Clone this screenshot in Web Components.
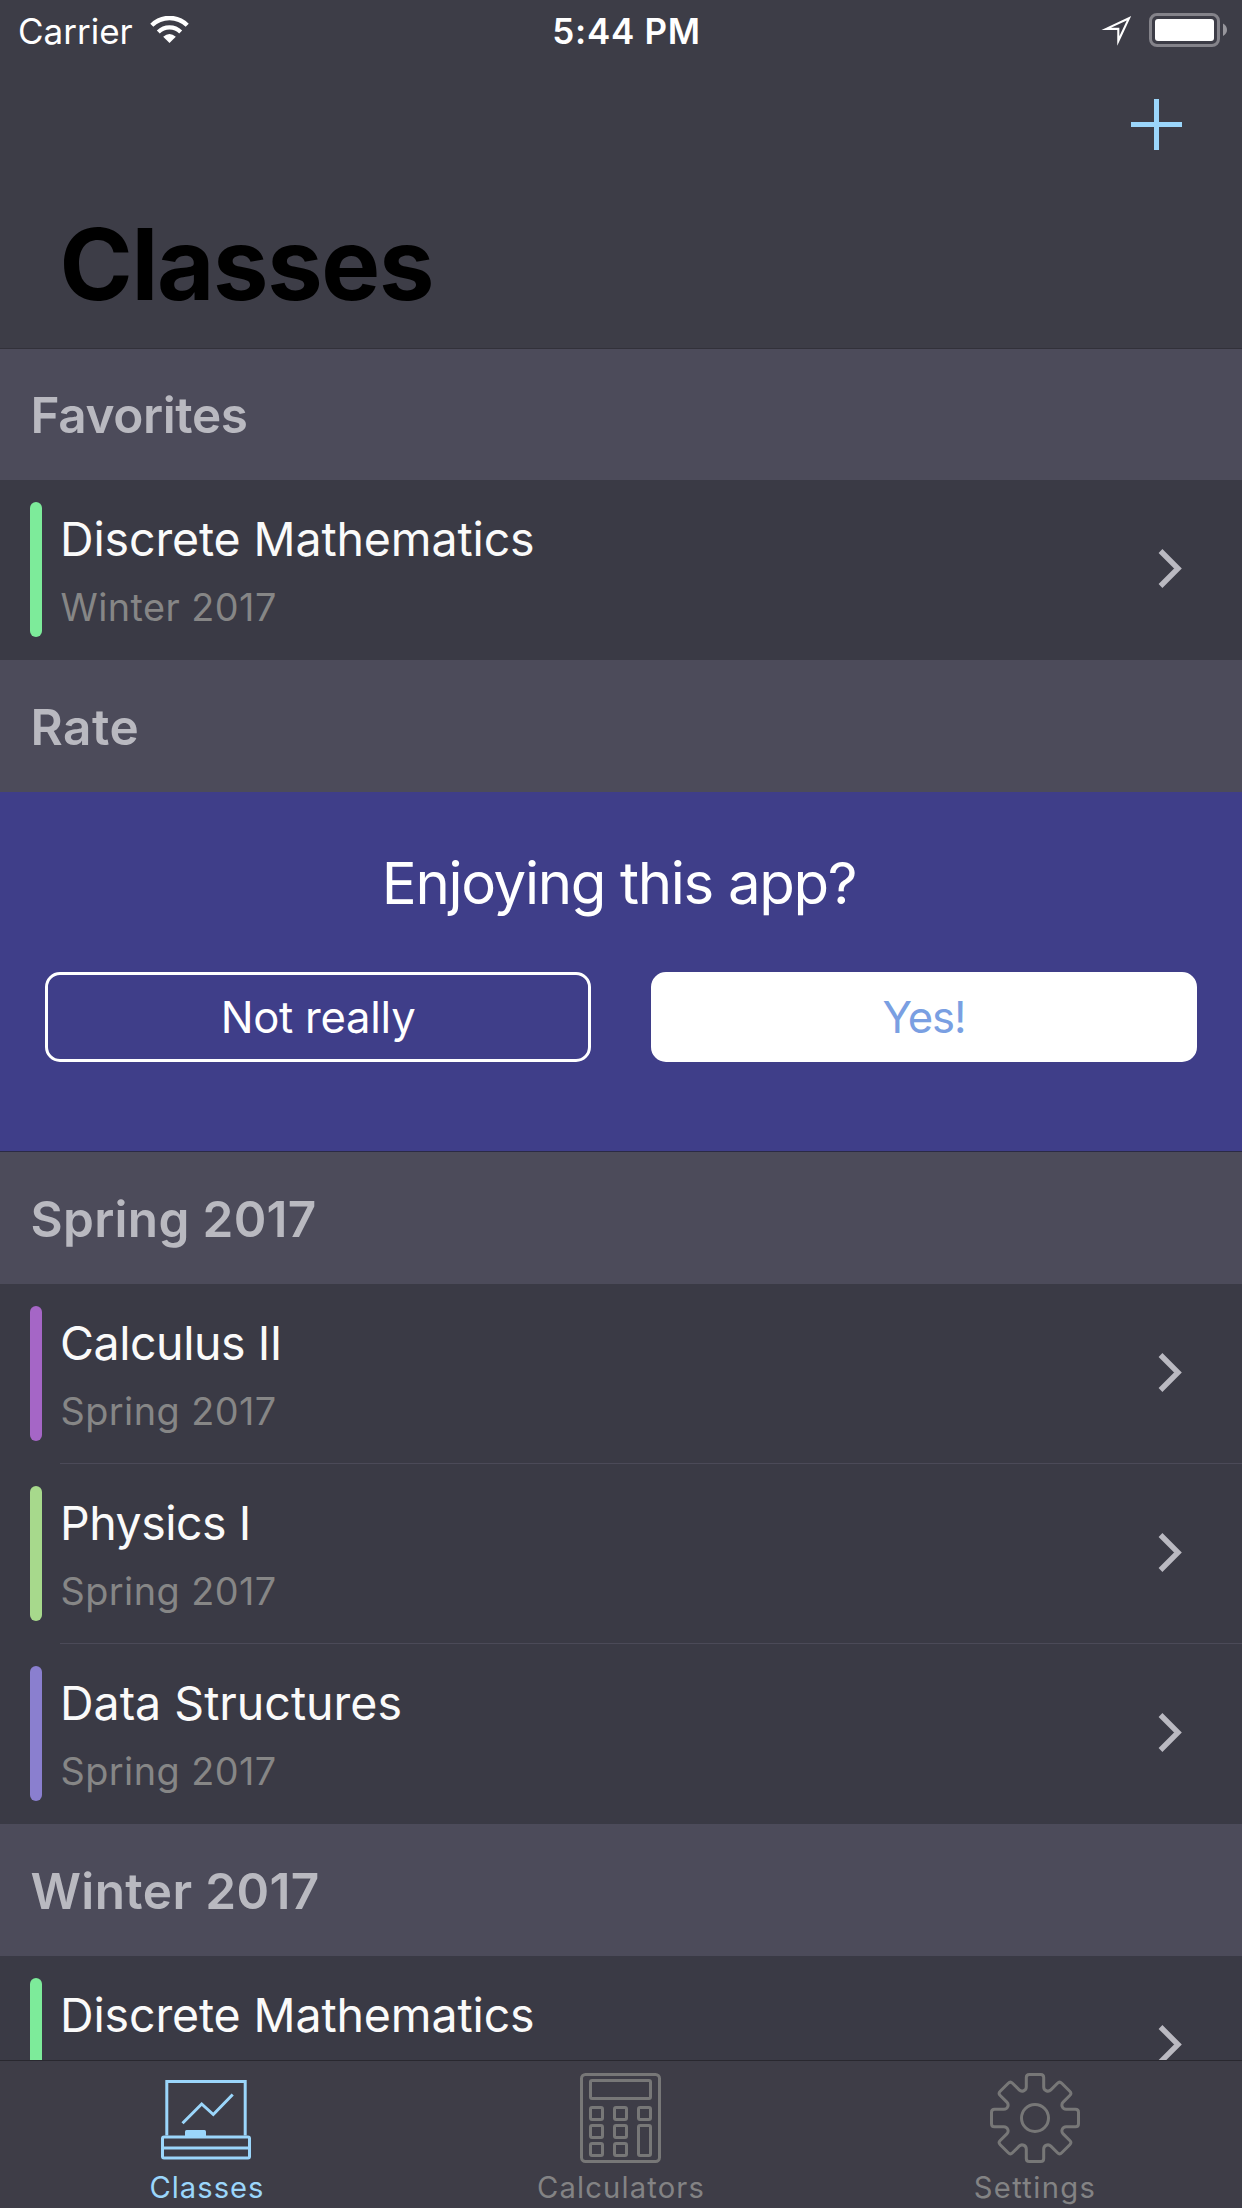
<!DOCTYPE html>
<html lang="en">
<head>
<meta charset="utf-8">
<title>Classes</title>
<style>
html,body{margin:0;padding:0;background:#3a3a45}
body{font-family:Inter,"Liberation Sans",sans-serif;color:#fff}
</style>
</head>
<body>
<app-screen>
  <nav-bar slot="top" heading="Classes" carrier="Carrier" time="5:44 PM"></nav-bar>
  <section-header style="--track:-.38px">Favorites</section-header>
  <class-row color="#7deb9a" style="--track:-.13px">Discrete Mathematics<span slot="term">Winter 2017</span></class-row>
  <section-header style="--track:.5px">Rate</section-header>
  <rate-card>Enjoying this app?
    <pill-button slot="actions" style="--track:-.26px">Not really</pill-button>
    <pill-button slot="actions" filled style="--track:-1.1px">Yes!</pill-button>
  </rate-card>
  <section-header style="--track:.3px">Spring 2017</section-header>
  <class-row color="#a566c6" divided style="--track:-.45px">Calculus II<span slot="term">Spring 2017</span></class-row>
  <class-row color="#a7d98c" divided style="--track:-.5px">Physics I<span slot="term">Spring 2017</span></class-row>
  <class-row color="#8a7fcf" style="--track:0px">Data Structures<span slot="term">Spring 2017</span></class-row>
  <section-header style="--track:.38px">Winter 2017</section-header>
  <class-row color="#7deb9a" style="--track:-.13px">Discrete Mathematics<span slot="term">Winter 2017</span></class-row>
  <tab-bar slot="bottom">
    <tab-item icon="board" active style="--track:1px">Classes</tab-item>
    <tab-item icon="calculator" style="--track:1.15px">Calculators</tab-item>
    <tab-item icon="gear" style="--track:1.35px">Settings</tab-item>
  </tab-bar>
</app-screen>
<script>
const define = (name, render) => customElements.define(name, class extends HTMLElement {
  connectedCallback() {
    if (!this.shadowRoot) this.attachShadow({mode: 'open'}).innerHTML = render(this);
  }
});

define('app-screen', () => `
<style>
:host{display:flex;flex-direction:column;width:1242px;height:2208px;overflow:hidden;background:#3a3a45}
main{flex:1;min-height:0;overflow:hidden;margin-top:-1px}
</style>
<slot name="top"></slot><main><slot></slot></main><slot name="bottom"></slot>`);

define('status-bar', el => `
<style>
:host{display:flex;height:62px;padding:0 14px 0 18px;font-size:35px;line-height:62px;white-space:nowrap}
div{flex:1 1 0;display:flex;align-items:flex-start}
.mid{justify-content:center;font-weight:600;letter-spacing:.7px;padding-left:7px}
.end{justify-content:flex-end}
.wifi{margin:16px 0 0 17px}
.loc{margin:16px 17px 0 0}
.bat{margin-top:13px}
svg{display:block;flex:none}
</style>
<div>${el.getAttribute('carrier')}
<svg class="wifi" width="39" height="28" viewBox="0 0 39 28"><path d="M1.8 9.2a25.2 25.2 0 0 1 35.4 0" fill="none" stroke="#fff" stroke-width="4.4"/><path d="M8.3 15.9a16 16 0 0 1 22.4 0" fill="none" stroke="#fff" stroke-width="4.2"/><path d="M13.2 20.8Q19.500 15.400 25.800 20.800L19.500 27z" fill="#fff"/></svg></div>
<div class="mid">${el.getAttribute('time')}</div>
<div class="end">
<svg class="loc" width="31" height="32" viewBox="0 0 31 32"><path d="M5.200 12.900L28 2.200L17.300 25V12.900z" fill="none" stroke="#fff" stroke-width="2.100" stroke-miterlimit="10"/></svg>
<svg class="bat" width="79" height="34" viewBox="0 0 79 34"><rect x="1.500" y="1.500" width="68" height="31" rx="6.500" fill="none" stroke="#84838a" stroke-width="3"/><rect x="6" y="6" width="59" height="22" rx="3" fill="#fff"/><path d="M74 10.500q4 2.300 4 6.300t-4 6.300z" fill="#97969c"/></svg>
</div>`);

define('nav-bar', el => `
<style>
:host{display:flex;flex-direction:column;height:349px;flex:none;box-sizing:border-box;border-bottom:1px solid #32313a;background:#3d3d47;position:relative;z-index:1}
.tools{display:flex;justify-content:flex-end;height:142px;padding-right:60px}
.tools svg{margin-top:37px}
h1{margin:0;padding-left:59.5px;font-size:99px;line-height:120px;font-weight:700;letter-spacing:-1.32px;color:#000}
</style>
<status-bar carrier="${el.getAttribute('carrier')}" time="${el.getAttribute('time')}"></status-bar>
<div class="tools"><svg width="51" height="51"><path d="M23 0h5v23h23v5H28v23h-5V28H0v-5h23z" fill="#9bd6fb"/></svg></div>
<h1>${el.getAttribute('heading')}</h1>`);

define('section-header', () => `
<style>
:host{display:flex;align-items:center;height:132px;box-sizing:border-box;padding:2px 0 0 30.5px;background:#4c4b5a;color:#b9b9c0;font-size:49.5px;font-weight:600;letter-spacing:var(--track)}
</style><slot></slot>`);

define('class-row', el => `
<style>
:host{display:flex;height:180px;box-sizing:border-box;padding-left:30px;background:#3a3a45}
i{flex:none;width:12px;height:135px;margin-top:22px;border-radius:6px;background:${el.getAttribute('color')}}
.body{flex:1;margin-left:18px;display:flex;justify-content:space-between;box-sizing:border-box;border-bottom:1px solid ${el.hasAttribute('divided') ? '#4b4a58' : 'transparent'}}
.text{display:flex;flex-direction:column;gap:16px;padding-top:30px;white-space:nowrap}
.name{font-size:46.5px;line-height:58px;color:#fafafa;letter-spacing:var(--track)}
.term{font-size:37.8px;line-height:46px;color:#868686;letter-spacing:.45px;padding-left:.5px}
svg{margin:69px 60px 0 0}
</style>
<i></i><div class="body"><div class="text"><div class="name"><slot></slot></div><div class="term"><slot name="term"></slot></div></div>
<svg width="25" height="40" viewBox="0 0 25 40"><path d="M3.500 2l17.500 17.500L3.500 37" fill="none" stroke="#bab9c1" stroke-width="5.400"/></svg></div>`);

define('rate-card', () => `
<style>
:host{display:flex;flex-direction:column;height:360px;box-sizing:border-box;padding:55px 45px 0;background:#3f3e89;border-bottom:1px solid #2b2a45}
.q{font-size:58.2px;line-height:72px;letter-spacing:-1.35px;text-align:center;color:#fff;padding-right:4px}
.actions{display:flex;gap:60px;margin-top:53px}
</style>
<div class="q"><slot></slot></div><div class="actions"><slot name="actions"></slot></div>`);

define('pill-button', el => `
<style>
:host{flex:1;display:flex;align-items:center;justify-content:center;height:90px;box-sizing:border-box;border:3px solid #fff;border-radius:15px;font-size:43.600px;letter-spacing:var(--track);${el.hasAttribute('filled') ? 'background:#fff;color:#7a9fe2' : 'color:#fff'}}
</style><slot></slot>`);

/* One gear outline: eight copies of a tooth and the rounded valley beside it. */
const gearPath = () => {
  let d = '';
  for (let k = 0; k < 8; k++) {
    const a = k * Math.PI / 4;
    const p = (x, y) => (x * Math.cos(a) - y * Math.sin(a)).toFixed(2) + ' ' + (x * Math.sin(a) + y * Math.cos(a)).toFixed(2);
    d += (k ? 'L' : 'M') + p(-8.7, -31.1) + 'L' + p(-8.7, -40.5) + 'Q' + p(-8.7, -43.5) + ' ' + p(-5.7, -43.5) +
      'L' + p(5.7, -43.5) + 'Q' + p(8.7, -43.5) + ' ' + p(8.7, -40.5) + 'L' + p(8.7, -31.1) + 'A4.2 4.2 0 0 0 ' + p(15.84, -28.14);
  }
  return d + 'z';
};
const key = (x, y, h = 12) => `<rect x="${x}" y="${y}" width="12" height="${h}" rx="1.500"/>`;
const ICONS = {
  board: `<path d="M4.800 62.500V8.500H83.200V62.500"/><rect x="0.500" y="64" width="87" height="21" rx="1.500"/><path d="M0 75H88M20.500 50.200L39.700 31L51.300 41.500L70.700 21.500"/><path d="M23 63v-4.500q0-1.500 1.500-1.500h18q1.500 0 1.500 1.500V63z" fill="currentColor" stroke="none"/>`,
  calculator: `<rect x="5.500" y="1.500" width="78" height="87" rx="4"/><rect x="14.500" y="7.500" width="60" height="18" rx="1.500"/>` +
    [14.5, 38.5].map(x => [34.5, 52.5, 70.5].map(y => key(x, y)).join('')).join('') + key(62.5, 34.5) + key(62.5, 52.5, 30),
  gear: `<g transform="translate(45 45)"><path d="${gearPath()}"/><circle r="13.500"/></g>`
};

define('tab-item', el => `
<style>
:host{flex:1 1 0;display:flex;flex-direction:column;align-items:center;gap:7px;padding-top:12px;color:${el.hasAttribute('active') ? '#9bd6fb' : '#838384'}}
svg{width:90px;height:90px;overflow:visible;fill:none;stroke:currentColor;stroke-width:3;flex:none;${el.hasAttribute('active') ? '' : 'color:#777777'}}
div{font-size:29.200px;line-height:36px;font-weight:400;letter-spacing:var(--track)}
</style>
<svg viewBox="0 0 90 90">${ICONS[el.getAttribute('icon')]}</svg><div><slot></slot></div>`);

define('tab-bar', () => `
<style>
:host{display:flex;flex:none;height:148px;box-sizing:border-box;border-top:1px solid #29282f;background:#3e3d47}
</style><slot></slot>`);
</script>
</body>
</html>
